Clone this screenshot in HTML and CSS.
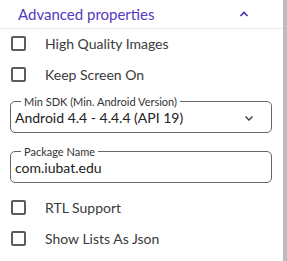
FILE: index.html
```html
<!DOCTYPE html>
<html lang="en">
  <head>
    <title>Advanced properties</title>
    <meta charset="UTF-8">
    <meta name="viewport" content="width=device-width, initial-scale=1.0">
    <link rel="stylesheet" href="styles.css">
  </head>

  <body>
    <div id="page">
      <div id="panel">
        <div class="panel-head">
          <span class="panel-title">Advanced properties</span>
          <svg class="chevron" width="10" height="6" viewBox="0 0 10 6">
            <path d="M1.5 5 L5 1.5 L8.5 5" fill="none" stroke="#4b2fb8" stroke-width="1.6"/>
          </svg>
        </div>

        <div class="check-list first">
          <label class="check-row"><span class="box"></span><span>High Quality Images</span></label>
          <label class="check-row"><span class="box"></span><span>Keep Screen On</span></label>
        </div>

        <fieldset class="field">
          <legend>Min SDK (Min. Android Version)</legend>
          <div class="field-value">
            <span>Android 4.4 - 4.4.4 (API 19)</span>
            <svg class="drop" width="10" height="6" viewBox="0 0 10 6">
              <path d="M1.5 1.5 L5 5 L8.5 1.5" fill="none" stroke="#444" stroke-width="1.5"/>
            </svg>
          </div>
        </fieldset>

        <fieldset class="field second">
          <legend>Package Name</legend>
          <div class="field-value">
            <span>com.iubat.edu</span>
          </div>
        </fieldset>

        <div class="check-list last">
          <label class="check-row"><span class="box"></span><span>RTL Support</span></label>
          <label class="check-row"><span class="box"></span><span>Show Lists As Json</span></label>
        </div>
      </div>
      <div id="scroll-edge"></div>
    </div>
  </body>
</html>
```

FILE: styles.css
```css
body {
  margin: 0;
  background-color: #fff;
  font-family: Lato, "Noto Sans", sans-serif;
  color: #333;
}

#page {
  display: flex;
  width: 287px;
  height: 261px;
  overflow: hidden;
}

#panel {
  width: 283px;
}

#scroll-edge {
  width: 4px;
  background-color: #bdbdbd;
}

.panel-head {
  height: 28px;
  display: flex;
  align-items: center;
  justify-content: space-between;
  padding: 0 34px 0 18px;
  border-bottom: 1px solid #e8e8e8;
}

.panel-title {
  font-size: 15px;
  color: #5638c2;
}

.check-list.first {
  margin-top: -1px;
}

.check-list.last {
  margin-top: 9px;
}

.check-row {
  height: 31px;
  display: flex;
  align-items: center;
  padding-left: 11px;
  font-size: 14px;
  color: #3a3a3a;
}

.box {
  width: 11px;
  height: 11px;
  border: 2px solid #5c5c5c;
  border-radius: 2px;
  margin-right: 19px;
}

.field {
  margin: 5px 11px 0 10px;
  padding: 0 4px 5px 4px;
  border: 1px solid #666;
  border-radius: 5px;
}

.field.second {
  margin-top: 12px;
}

.field legend {
  font-size: 11px;
  line-height: 13px;
  padding: 0 3px;
  margin-left: 6px;
  color: #333;
}

.field-value {
  height: 19px;
  display: flex;
  align-items: center;
  justify-content: space-between;
  padding-right: 13px;
  font-size: 14px;
  color: #222;
}
```
